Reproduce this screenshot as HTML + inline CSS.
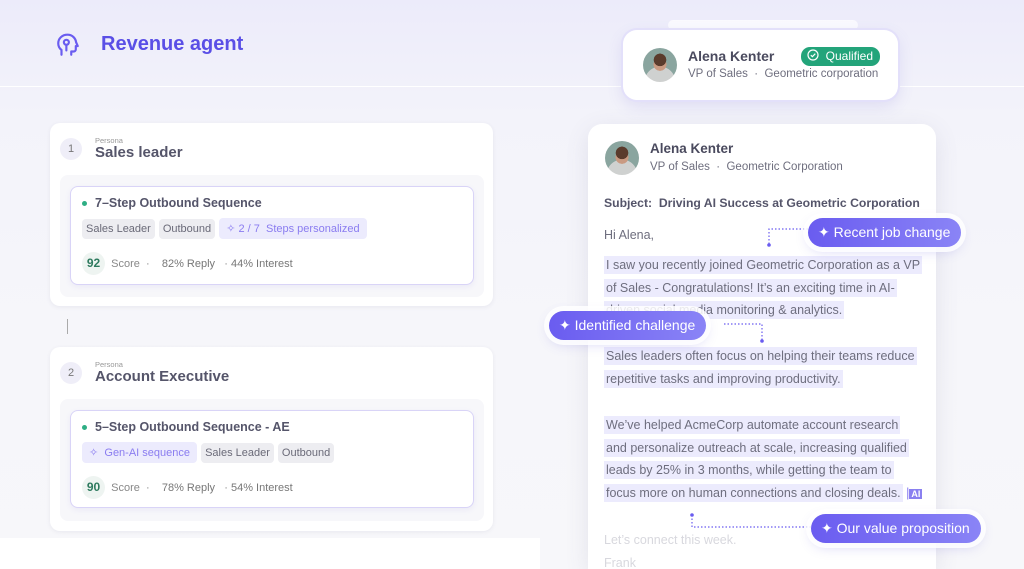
<!DOCTYPE html>
<html style="width:1024px;height:569px;overflow:hidden"><head><meta charset="utf-8"><style>
*{margin:0;padding:0;box-sizing:border-box}
body{width:1024px;height:569px;overflow:hidden;font-family:"Liberation Sans",sans-serif;background:linear-gradient(180deg,#ecebfa 0%,#f3f3fa 20%,#f6f6fa 60%,#f7f7fa 100%);position:relative;color:#4a4a5a}
.a{position:absolute}
.card{background:#fff;border-radius:10px;box-shadow:0 1px 4px rgba(60,60,100,.08)}
.inner{background:#f7f7fa;border-radius:8px}
.seq{background:#fff;border:1.5px solid #d9d4f7;border-radius:8px;box-shadow:0 2px 6px rgba(90,80,200,.08)}
.tag{display:inline-block;background:#ededf1;color:#6a6a78;font-size:11px;padding:4px 4px;border-radius:4px;margin-right:4px}
.tagp{background:#ecebfd;color:#8a7cf0}
.dot{display:inline-block;width:5px;height:5px;border-radius:50%;background:#2eae84;margin-right:8px;vertical-align:middle}
.av{border-radius:50%;background:radial-gradient(circle at 50% 35%,#5a3b2c 0 22%,transparent 23%),radial-gradient(circle at 50% 48%,#c99a82 0 26%,transparent 27%),radial-gradient(circle at 50% 100%,#cfd1d0 0 40%,transparent 41%),#8aa59f}
.hl{background:#ecebfd;padding:2px 2px}
.pill{background:linear-gradient(90deg,#6a5cf0,#8a84f6);color:#fff;font-size:14px;border-radius:16px;padding:6px 11px 6px 10px;box-shadow:0 0 0 5px rgba(255,255,255,.85),0 4px 12px rgba(100,90,220,.25);white-space:nowrap}
.email p{font-size:12.5px;color:#6e6e7e;line-height:22.8px}
.stat{font-size:11px;color:#888;white-space:nowrap}
.sc{display:inline-block;width:23px;height:23px;border-radius:50%;background:#eef4f1;color:#2e7a5e;font-weight:bold;font-size:12px;text-align:center;line-height:23px}
</style></head><body>
<div class="a" style="left:0;top:86px;width:1024px;height:1px;background:#fff"></div>
<svg class="a" style="left:55px;top:32px" width="26" height="26" viewBox="0 0 24 24" fill="none" stroke="#6a5cf0" stroke-width="2" stroke-linecap="round" stroke-linejoin="round"><path d="M6 21v-4.5C3.5 14.8 3 12.5 3 10.5 3 5.8 6.8 2.5 11.5 2.5S19 6 19.5 9.5l1.5 3.5h-1.8v3c0 1.2-1 2-2 2H15v3"/><circle cx="10.5" cy="9.5" r="2.3"/><path d="M10.5 11.8V17"/></svg>
<div class="a" style="left:101px;top:33px;font-size:20px;font-weight:bold;color:#5a4fe6">Revenue agent</div>

<!-- card 1 -->
<div class="a card" style="left:50px;top:123px;width:443px;height:183px">
 <div class="a" style="left:10px;top:15px;width:22px;height:22px;border-radius:50%;background:#efeef8;color:#777;font-size:11px;text-align:center;line-height:22px">1</div>
 <div class="a" style="left:45px;top:13px;font-size:7.5px;color:#999">Persona</div>
 <div class="a" style="left:45px;top:21px;font-size:15px;font-weight:bold;color:#55556a">Sales leader</div>
 <div class="a inner" style="left:10px;top:52px;width:424px;height:122px"></div>
 <div class="a seq" style="left:20px;top:63px;width:404px;height:99px">
  <div class="a" style="left:11px;top:9px;font-size:12.5px;font-weight:bold;color:#55556a;white-space:nowrap"><span class="dot"></span>7–Step Outbound Sequence</div>
  <div class="a" style="left:11px;top:31px;white-space:nowrap"><span class="tag">Sales Leader</span><span class="tag">Outbound</span><span class="tag tagp">&nbsp;✧ 2 / 7&nbsp; Steps personalized&nbsp;</span></div>
  <div class="a stat" style="left:11px;top:65px"><span class="sc">92</span>&nbsp; Score &nbsp;·&nbsp;&nbsp;&nbsp; <span style="color:#777">82% Reply</span>&nbsp;&nbsp; · <span style="color:#777">44% Interest</span></div>
 </div>
</div>
<div class="a" style="left:67px;top:319px;width:1px;height:15px;background:#aaa"></div>
<!-- card 2 -->
<div class="a card" style="left:50px;top:347px;width:443px;height:184px">
 <div class="a" style="left:10px;top:15px;width:22px;height:22px;border-radius:50%;background:#efeef8;color:#777;font-size:11px;text-align:center;line-height:22px">2</div>
 <div class="a" style="left:45px;top:13px;font-size:7.5px;color:#999">Persona</div>
 <div class="a" style="left:45px;top:21px;font-size:15px;font-weight:bold;color:#55556a">Account Executive</div>
 <div class="a inner" style="left:10px;top:52px;width:424px;height:122px"></div>
 <div class="a seq" style="left:20px;top:63px;width:404px;height:98px">
  <div class="a" style="left:11px;top:9px;font-size:12.5px;font-weight:bold;color:#55556a;white-space:nowrap"><span class="dot"></span>5–Step Outbound Sequence - AE</div>
  <div class="a" style="left:11px;top:31px;white-space:nowrap"><span class="tag tagp">&nbsp;✧ &nbsp;Gen-AI sequence&nbsp;</span><span class="tag">Sales Leader</span><span class="tag">Outbound</span></div>
  <div class="a stat" style="left:11px;top:65px"><span class="sc">90</span>&nbsp; Score &nbsp;·&nbsp;&nbsp;&nbsp; <span style="color:#777">78% Reply</span>&nbsp;&nbsp; · <span style="color:#777">54% Interest</span></div>
 </div>
</div>
<div class="a" style="left:0;top:538px;width:540px;height:31px;background:#fff"></div>

<!-- top contact -->
<div class="a" style="left:668px;top:20px;width:190px;height:10px;border-radius:10px;background:#fff;opacity:.7"></div>
<div class="a" style="left:623px;top:30px;width:275px;height:70px;background:#fff;border-radius:14px;box-shadow:0 0 0 2px #e3e0fa,0 6px 16px rgba(100,90,200,.15)">
 <div class="a av" style="left:20px;top:18px;width:34px;height:34px"></div>
 <div class="a" style="left:65px;top:18px;font-size:14px;font-weight:bold;color:#4a4a5e">Alena Kenter</div>
 <div class="a" style="left:65px;top:38px;font-size:11.5px;color:#6e6e7e;white-space:nowrap">VP of Sales &nbsp;·&nbsp; Geometric corporation</div>
 <div class="a" style="left:178px;top:17px;background:#23a47a;color:#fff;font-size:12px;border-radius:9px;padding:2px 7px 3px 6px;white-space:nowrap"><svg width="12" height="12" viewBox="0 0 12 12" style="vertical-align:-1px" fill="none" stroke="#fff" stroke-width="1.2"><circle cx="6" cy="6" r="5"/><path d="M3.8 6.2l1.6 1.5 2.9-3"/></svg>&nbsp; Qualified</div>
</div>

<!-- email -->
<div class="a email" style="left:588px;top:124px;width:348px;height:445px;background:#fff;border-radius:14px 14px 0 0;box-shadow:0 6px 24px rgba(80,80,120,.12);overflow:hidden">
 <div class="a av" style="left:17px;top:17px;width:34px;height:34px"></div>
 <div class="a" style="left:62px;top:17px;font-size:13.5px;font-weight:bold;color:#4a4a5e">Alena Kenter</div>
 <div class="a" style="left:62px;top:37px;font-size:11.5px;color:#6e6e7e;white-space:nowrap">VP of Sales &nbsp;·&nbsp; Geometric Corporation</div>
 <div class="a" style="left:16px;top:72px;font-size:12.2px;font-weight:bold;color:#55556a;white-space:nowrap">Subject:&nbsp; Driving AI Success at Geometric Corporation</div>
 <div class="a" style="left:16px;top:100px;width:330px">
  <p>Hi Alena,</p>
  <p style="margin-top:7px"><span class="hl">I saw you recently joined Geometric Corporation as a VP</span><br><span class="hl">of Sales - Congratulations! It’s an exciting time in AI-</span><br><span class="hl">driven social media monitoring &amp; analytics.</span></p>
  <p style="margin-top:23px"><span class="hl">Sales leaders often focus on helping their teams reduce</span><br><span class="hl">repetitive tasks and improving productivity.</span></p>
  <p style="margin-top:23px"><span class="hl">We’ve helped AcmeCorp automate account research</span><br><span class="hl">and personalize outreach at scale, increasing qualified</span><br><span class="hl">leads by 25% in 3 months, while getting the team to</span><br><span class="hl">focus more on human connections and closing deals.</span> <span style="color:#8a7cf0">|</span><span style="background:#8a80f0;color:#fff;font-size:9px;font-weight:bold;padding:0 2px">AI</span></p>
  <p style="margin-top:23px;color:#d8d8de">Let’s connect this week.<br>Frank</p>
 </div>
</div>

<svg class="a" style="left:0;top:0" width="1024" height="569" fill="none" stroke="#6a5cf0" stroke-width="1.2" stroke-dasharray="1.5 2">
 <path d="M808 229H769v15"/><path d="M724 324H762v16"/><path d="M692 515v12H812"/>
 <g fill="#6a5cf0" stroke="none"><circle cx="769" cy="245" r="1.8"/><circle cx="762" cy="341" r="1.8"/><circle cx="692" cy="515" r="1.8"/></g>
</svg>
<div class="a pill" style="left:808px;top:218px">✦ Recent job change</div>
<div class="a pill" style="left:549px;top:311px">✦ Identified challenge</div>
<div class="a pill" style="left:811px;top:514px">✦ Our value proposition</div>
</body></html>
